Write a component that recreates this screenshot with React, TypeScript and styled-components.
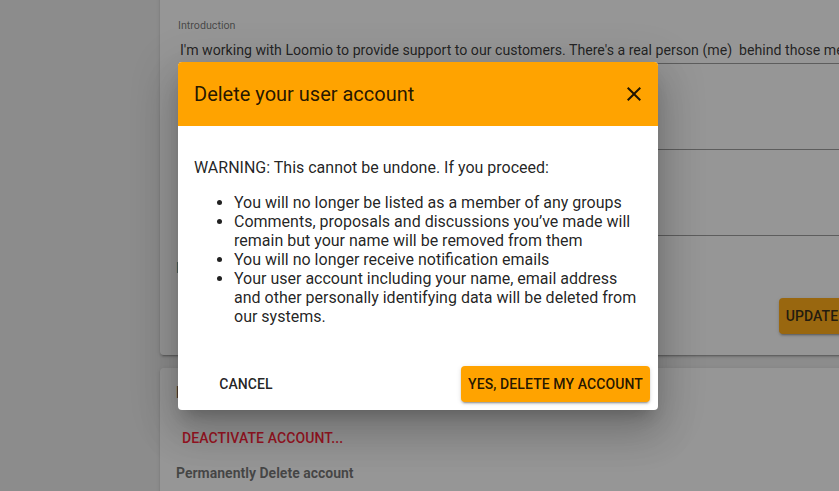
import React from "react";
import styled, { createGlobalStyle } from "styled-components";

const GlobalStyle = createGlobalStyle`
  html, body {
    margin: 0;
    padding: 0;
    width: 839px;
    height: 491px;
    overflow: hidden;
    background: #e8e8e8;
    font-family: Roboto, "Liberation Sans", Arial, sans-serif;
    -webkit-font-smoothing: antialiased;
  }
  * { box-sizing: border-box; }
`;

const Page = styled.div`
  position: relative;
  display: flex;
  width: 839px;
  height: 491px;
  overflow: hidden;
  background: #e8e8e8;
`;

const SideSpace = styled.div`
  width: 160px;
  flex-shrink: 0;
`;

const Column = styled.main`
  display: flex;
  flex-direction: column;
  gap: 13px;
  width: 760px;
  flex-shrink: 0;
  margin-top: -12px;
`;

const Card = styled.section<{ $pt: number; $pb: number }>`
  display: flex;
  flex-direction: column;
  background: #fafafa;
  border-radius: 4px;
  padding: ${(p) => p.$pt}px 16px ${(p) => p.$pb}px 16px;
  box-shadow: 0 3px 1px -2px rgba(0, 0, 0, 0.2), 0 2px 2px 0 rgba(0, 0, 0, 0.14),
    0 1px 5px 0 rgba(0, 0, 0, 0.12);
`;

const Field = styled.div<{ $mt: number }>`
  display: flex;
  flex-direction: column;
  gap: 6px;
  margin-top: ${(p) => p.$mt}px;
  padding-left: 2px;
`;

const FieldLabel = styled.label`
  font-size: 10.7px;
  line-height: 16px;
  color: rgba(0, 0, 0, 0.6);
`;

const FieldValue = styled.div<{ $minH: number }>`
  min-height: ${(p) => p.$minH}px;
  padding: 0 0 3px 2px;
  border-bottom: 1px solid rgba(0, 0, 0, 0.42);
  font-size: 14.15px;
  line-height: 20px;
  color: rgba(0, 0, 0, 0.87);
  white-space: pre;
  overflow: hidden;
`;

const TealLink = styled.a`
  margin-top: 22px;
  font-size: 14px;
  line-height: 20px;
  color: #00838f;
  text-decoration: none;
`;

const ActionRow = styled.div`
  display: flex;
  justify-content: flex-end;
  margin-top: 20px;
`;

const RaisedButton = styled.button`
  height: 36px;
  padding: 0 7px;
  border: none;
  border-radius: 4px;
  background: #ffa300;
  color: rgba(0, 0, 0, 0.87);
  font-family: Roboto, "Liberation Sans", Arial, sans-serif;
  font-size: 14px;
  font-weight: 500;
  letter-spacing: 0.1px;
  text-transform: uppercase;
  box-shadow: 0 3px 1px -2px rgba(0, 0, 0, 0.2), 0 2px 2px 0 rgba(0, 0, 0, 0.14),
    0 1px 5px 0 rgba(0, 0, 0, 0.12);
  cursor: pointer;
`;

const FlatButton = styled.button<{ $color: string; $minW?: number }>`
  height: 36px;
  min-width: ${(p) => p.$minW ?? 0}px;
  padding: 0 6px;
  border: none;
  background: transparent;
  color: ${(p) => p.$color};
  font-family: Roboto, "Liberation Sans", Arial, sans-serif;
  font-size: 14px;
  font-weight: 500;
  letter-spacing: 0.1px;
  text-transform: uppercase;
  cursor: pointer;
`;

const SectionHeading = styled.h3`
  margin: 0;
  font-size: 16px;
  line-height: 18px;
  font-weight: 700;
  color: rgba(0, 0, 0, 0.75);
`;

const DeactivateRow = styled.div`
  display: flex;
  margin-top: 18px;
`;

const SubHeading = styled.div`
  margin-top: 7px;
  font-size: 14px;
  line-height: 20px;
  font-weight: 700;
  color: rgba(0, 0, 0, 0.6);
`;

const Overlay = styled.div`
  position: absolute;
  inset: 0;
  background: rgba(33, 33, 33, 0.46);
  display: flex;
  align-items: flex-start;
  padding: 62px 0 0 178px;
`;

const Dialog = styled.div`
  width: 480px;
  background: #fff;
  border-radius: 4px;
  overflow: hidden;
  display: flex;
  flex-direction: column;
  box-shadow: 0 11px 15px -7px rgba(0, 0, 0, 0.2), 0 24px 38px 3px rgba(0, 0, 0, 0.14),
    0 9px 46px 8px rgba(0, 0, 0, 0.12);
`;

const DialogHeader = styled.header`
  height: 64px;
  display: flex;
  align-items: center;
  justify-content: space-between;
  padding: 0 12px 0 16px;
  background: #ffa300;
`;

const DialogTitle = styled.h2`
  margin: 0;
  font-size: 20px;
  font-weight: 400;
  color: rgba(0, 0, 0, 0.87);
`;

const CloseButton = styled.button`
  width: 24px;
  height: 24px;
  padding: 0;
  border: none;
  background: transparent;
  display: flex;
  align-items: center;
  justify-content: center;
  cursor: pointer;
`;

const DialogBody = styled.div`
  padding: 16px;
  font-size: 16px;
  line-height: 19px;
  color: rgba(0, 0, 0, 0.87);

  p {
    margin: 16px 0;
  }
  ul {
    margin: 16px 0;
    padding-left: 40px;
  }
`;

const DialogFooter = styled.footer`
  display: flex;
  align-items: center;
  justify-content: space-between;
  padding: 8px;
`;

export default function App() {
  return (
    <>
      <GlobalStyle />
      <Page>
        <SideSpace />
        <Column>
          <Card $pt={30} $pb={21}>
            <Field $mt={0}>
              <FieldLabel>Introduction</FieldLabel>
              <FieldValue $minH={24}>
                I'm working with Loomio to provide support to our customers. There's a real person (me)  behind those messages.
              </FieldValue>
            </Field>
            <Field $mt={20}>
              <FieldLabel>Location</FieldLabel>
              <FieldValue $minH={44}>Wellington</FieldValue>
            </Field>
            <Field $mt={20}>
              <FieldLabel>Language</FieldLabel>
              <FieldValue $minH={44}>English</FieldValue>
            </Field>
            <TealLink href="#">Reset password</TealLink>
            <ActionRow>
              <RaisedButton>Update profile</RaisedButton>
            </ActionRow>
          </Card>
          <Card $pt={16} $pb={16}>
            <SectionHeading>Deactivate account</SectionHeading>
            <DeactivateRow>
              <FlatButton $color="#ff0a26">Deactivate account...</FlatButton>
            </DeactivateRow>
            <SubHeading>Permanently Delete account</SubHeading>
          </Card>
        </Column>
        <Overlay>
          <Dialog role="dialog">
            <DialogHeader>
              <DialogTitle>Delete your user account</DialogTitle>
              <CloseButton aria-label="Close">
                <svg width="24" height="24" viewBox="0 0 24 24">
                  <path
                    fill="rgba(0,0,0,0.87)"
                    d="M19,6.41L17.59,5L12,10.59L6.41,5L5,6.41L10.59,12L5,17.59L6.41,19L12,13.41L17.59,19L19,17.59L13.41,12L19,6.41Z"
                  />
                </svg>
              </CloseButton>
            </DialogHeader>
            <DialogBody>
              <p>WARNING: This cannot be undone. If you proceed:</p>
              <ul>
                <li>You will no longer be listed as a member of any groups</li>
                <li>Comments, proposals and discussions you’ve made will remain but your name will be removed from them</li>
                <li>You will no longer receive notification emails</li>
                <li>Your user account including your name, email address and other personally identifying data will be deleted from our systems.</li>
              </ul>
            </DialogBody>
            <DialogFooter>
              <FlatButton $color="rgba(0,0,0,0.87)" $minW={120}>Cancel</FlatButton>
              <RaisedButton>Yes, delete my account</RaisedButton>
            </DialogFooter>
          </Dialog>
        </Overlay>
      </Page>
    </>
  );
}
